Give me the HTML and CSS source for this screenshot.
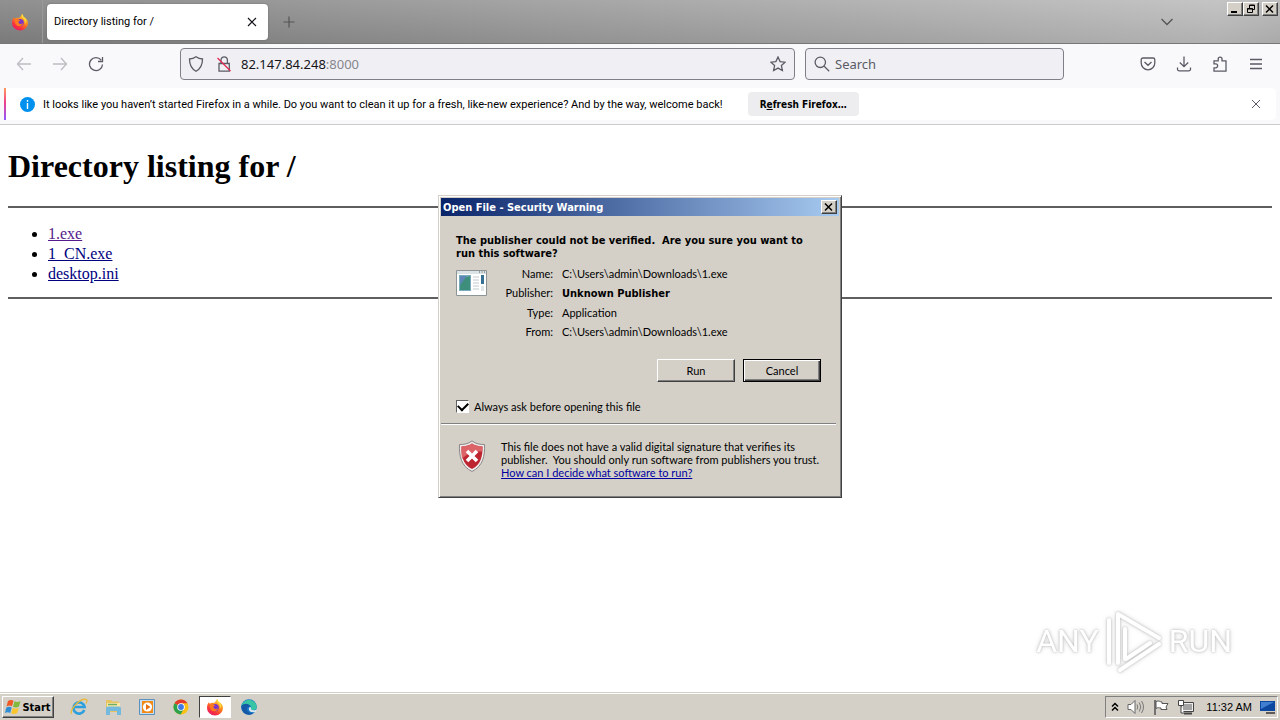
FILE: index.html
```html
<!DOCTYPE html>
<html lang="en">
<head>
<meta charset="utf-8">
<title>Directory listing for /</title>
<link rel="stylesheet" href="styles.css">
</head>
<body>
<svg class="defs" width="0" height="0" aria-hidden="true">
  <defs>
    <linearGradient id="ffOuter" x1="0.8" y1="0" x2="0.2" y2="1">
      <stop offset="0" stop-color="#ffe044"/><stop offset="0.4" stop-color="#ff8a1c"/><stop offset="0.75" stop-color="#f8303f"/><stop offset="1" stop-color="#e01a70"/>
    </linearGradient>
    <symbol id="firefox" viewBox="0 0 18 18">
      <path d="M11 1c1 1 1.300 2 1.400 2.800C15.500 5.200 17 7.600 17 10a8 7.600 0 0 1-16 0C1 7.400 1.800 5.400 3 4.200c.2.8.5 1.200 1 1.600C5.500 4.500 7 4.800 8 5c1-.6 2-2 3-4z" fill="url(#ffOuter)"/>
      <circle cx="9.200" cy="9.600" r="3.600" fill="#7a36c8"/>
      <path d="M4 6.500c2-1 4 .2 5.200 1.200-1.600.2-2 1-1.600 2 .8 1.700 3.200 1.500 4.600.5-1 3-4.200 3.800-6.400 2.200C4 11 3.500 8.500 4 6.500z" fill="#ff7a1f"/>
      <path d="M11 1c-.6 2.500.4 3.600 1.800 5 1.200 1.400 1.400 3 .9 5 2-1.800 2.200-5.200-1.300-7.200C12.300 3 12 2 11 1z" fill="#ffdc3a"/>
    </symbol>
  </defs>
</svg>

<header class="tabbar">
  <div class="view-btn"><svg width="18" height="18"><use href="#firefox"/></svg></div>
  <div class="tab">
    <span class="tab-title">Directory listing for /</span>
    <button class="icon-btn" aria-label="Close tab"><svg width="10" height="10" viewBox="0 0 10 10"><path d="M1 1l8 8M9 1l-8 8" stroke="#15141a" stroke-width="1.200"/></svg></button>
  </div>
  <button class="icon-btn newtab" aria-label="New tab"><svg width="12" height="12" viewBox="0 0 12 12"><path d="M6 .5v11M.5 6h11" stroke="#555" stroke-width="1.200"/></svg></button>
  <button class="icon-btn alltabs" aria-label="List all tabs"><svg width="14" height="8" viewBox="0 0 14 8"><path d="M1.500 1l5.500 5.500L12.500 1" fill="none" stroke="#555" stroke-width="1.300"/></svg></button>
  <div class="win-controls">
    <button class="win-btn" aria-label="Minimize"><svg width="12" height="10" viewBox="0 0 12 10"><path d="M2 7h6v2H2z"/></svg></button>
    <button class="win-btn" aria-label="Restore"><svg width="12" height="10" viewBox="0 0 12 10"><path d="M4.500 4V1h5v4.500H7M4 1.500h6M2.500 4.500h5v4h-5zM2 5h6" fill="none" stroke="#000"/></svg></button>
    <button class="win-btn close" aria-label="Close"><svg width="12" height="10" viewBox="0 0 12 10"><path d="M2 1.500l7 7M9 1.500l-7 7" stroke="#000" stroke-width="1.500"/></svg></button>
  </div>
</header>

<nav class="toolbar">
  <div class="btn-group">
    <button class="icon-btn dim" aria-label="Back"><svg width="16" height="16" viewBox="0 0 16 16"><path d="M15 8H1.500M7 2L1.500 8 7 14"/></svg></button>
    <button class="icon-btn dim" aria-label="Forward"><svg width="16" height="16" viewBox="0 0 16 16"><path d="M1 8h13.500M9 2l5.500 6L9 14"/></svg></button>
    <button class="icon-btn" aria-label="Reload"><svg width="16" height="16" viewBox="0 0 16 16"><path d="M13.200 4.200A6.500 6.500 0 1 0 14.500 8.500M14.500 1v4.500H10"/></svg></button>
  </div>
  <span class="spring"></span>
  <div class="field url">
    <svg width="16" height="16" viewBox="0 0 16 16"><path d="M8 .8c2 1.500 4.200 2.200 6.500 2.200 0 5.500-1.500 9.500-6.500 12.300C3 12.500 1.500 8.500 1.500 3 3.800 3 6 2.300 8 .8z"/></svg>
    <svg class="lock" width="16" height="16" viewBox="0 0 16 16"><path d="M3 7.500h10.300v7.700H3zM5 7.500V4a3.200 3.200 0 0 1 6.400 0v3.500"/><path d="M1.500 2l13 13" stroke="#e22850"/></svg>
    <div class="address" role="textbox" aria-label="Address">82.147.84.248<span class="port">:8000</span></div>
    <button class="icon-btn" aria-label="Bookmark this page"><svg width="16" height="16" viewBox="0 0 16 16"><path d="M8 1l2.100 4.600 5 .6-3.700 3.400 1 5L8 12.100l-4.400 2.500 1-5L.9 6.200l5-.6z"/></svg></button>
  </div>
  <div class="field search">
    <svg width="16" height="16" viewBox="0 0 16 16"><circle cx="6.300" cy="6.300" r="5.200"/><path d="M10.200 10.200l5 5"/></svg>
    <input type="text" placeholder="Search" aria-label="Search">
  </div>
  <span class="spring"></span>
  <div class="btn-group">
    <button class="icon-btn" aria-label="Pocket"><svg width="16" height="16" viewBox="0 0 16 16"><path d="M3 2h10a1.800 1.800 0 0 1 1.800 1.800V7A6.800 6.800 0 0 1 1.200 7V3.800A1.800 1.800 0 0 1 3 2zM4.500 6L8 9.300 11.500 6"/></svg></button>
    <button class="icon-btn" aria-label="Downloads"><svg width="16" height="16" viewBox="0 0 16 16"><path d="M8 .5v10M3.800 6.500L8 10.700l4.200-4.200M1.500 11.500v1.700A1.600 1.600 0 0 0 3 14.800h10a1.600 1.600 0 0 0 1.500-1.600v-1.700"/></svg></button>
    <button class="icon-btn" aria-label="Extensions"><svg width="16" height="16" viewBox="0 0 16 16"><path d="M2 7.500V4.800h4.200V3a1.900 1.900 0 0 1 3.800 0v1.800h4v10.400H2v-3.400h1.700a1.900 1.900 0 0 0 0-3.900H2z"/></svg></button>
    <button class="icon-btn" aria-label="Menu"><svg width="14" height="12" viewBox="0 0 14 12"><path d="M1 1.500h12M1 6h12M1 10.500h12"/></svg></button>
  </div>
</nav>

<div class="notice-wrap">
  <div class="notice">
    <svg width="15" height="15" viewBox="0 0 15 15"><circle cx="7.500" cy="7.500" r="7.500" fill="#0090ed"/><path d="M7.500 3v1.800M7.500 6v6" stroke="#fff" stroke-width="1.400"/></svg>
    <span class="notice-text">It looks like you haven’t started Firefox in a while. Do you want to clean it up for a fresh, like-new experience? And by the way, welcome back!</span>
    <button class="refresh">R<u>e</u>fresh Firefox…</button>
    <button class="icon-btn dismiss" aria-label="Close message"><svg width="10" height="10" viewBox="0 0 10 10"><path d="M1 1l8 8M9 1l-8 8" stroke="#5b5b66"/></svg></button>
  </div>
</div>

<main class="page">
  <h1>Directory listing for /</h1>
  <hr>
  <ul>
    <li><a class="visited" href="#">1.exe</a></li>
    <li><a href="#">1_CN.exe</a></li>
    <li><a href="#">desktop.ini</a></li>
  </ul>
  <hr>
  <div class="watermark">
    <span>ANY</span>
    <svg width="60" height="64" viewBox="0 0 60 64"><g fill="none" stroke="#fff" stroke-width="4" stroke-linejoin="round" stroke-linecap="round"><path d="M5 11v43M14 54V5l41 24M55 35L16 61M21 50V20M22 50l24-16"/></g></svg>
    <span>RUN</span>
  </div>
</main>

<section class="dialog" role="dialog" aria-labelledby="dlg-title">
  <div class="titlebar">
    <span id="dlg-title">Open File - Security Warning</span>
    <button class="win-btn" aria-label="Close dialog"><svg width="12" height="10" viewBox="0 0 12 10"><path d="M2 1.500l7 7M9 1.500l-7 7" stroke="#000" stroke-width="1.500"/></svg></button>
  </div>
  <div class="dlg-body">
    <p class="question">The publisher could not be verified.&nbsp; Are you sure you want to<br>run this software?</p>
    <div class="details">
      <svg width="31" height="26" viewBox="0 0 31 26"><path d="M.5.5h30v25H.5z" fill="#fff" stroke="#8d9496"/><path d="M1 1h29v3H1z" fill="#dce3e6"/><path d="M23 2h1M25.500 2h1M28 2h1" stroke="#555"/><path d="M3 5h12v16H3z" fill="#78aabd"/><path d="M4 9l10-3v14H4z" fill="#3d8f7c"/><path d="M4 6h7L4 15z" fill="#5c86b6"/><path d="M17 7h6M17 10h6M17 13h6M17 16h6M17 19h6" stroke="#c4cace"/><path d="M25 5h3v9h-3z" fill="#356f91"/><path d="M25 16h3v5h-3z" fill="#e1e5e8"/></svg>
      <dl>
        <dt>Name:</dt><dd>C:\Users\admin\Downloads\1.exe</dd>
        <dt>Publisher:</dt><dd><b>Unknown Publisher</b></dd>
        <dt>Type:</dt><dd>Application</dd>
        <dt>From:</dt><dd>C:\Users\admin\Downloads\1.exe</dd>
      </dl>
    </div>
    <div class="actions">
      <button class="classic">Run</button>
      <button class="classic default">Cancel</button>
    </div>
    <label class="ask"><input type="checkbox" checked>Always ask before opening this file</label>
  </div>
  <div class="dlg-foot">
    <svg width="28" height="32" viewBox="0 0 28 32"><path d="M14 1c4 3 8 3.500 12.500 3.500C27 16 25 26 14 31.500 3 26 1 16 1.500 4.500 6 4.500 10 4 14 1z" fill="#eee" stroke="#8b8585"/><path d="M14 3.500c3.500 2.300 7 3 10.500 3C24.800 16 23 24.500 14 29 5 24.500 3.200 16 3.500 6.500c3.500 0 7-.7 10.500-3z" fill="#bd2630"/><path d="M14 3.500c3.500 2.300 7 3 10.500 3l-.3 5C18 11 9 13 4 19 3.500 15 3.400 11 3.500 6.500c3.500 0 7-.7 10.500-3z" fill="#dc6468"/><path d="M9 11l10 10M19 11L9 21" stroke="#fff" stroke-width="3.600"/></svg>
    <p>This file does not have a valid digital signature that verifies its<br>publisher.&nbsp; You should only run software from publishers you trust.<br><a href="#">How can I decide what software to run?</a></p>
  </div>
</section>

<footer class="taskbar">
  <button class="start"><svg width="17" height="16" viewBox="0 0 17 16"><path d="M3 2c2-1.300 4-1.200 5.500-.2L7 7.300C5.300 6.300 3.500 6.300 1.500 7.500z" fill="#ef5a24"/><path d="M9.500 2.300c2 1 4 1 6-.3L14 7.500c-2 1.200-4 1.200-6 .2z" fill="#82b93d"/><path d="M1.200 8.700c2-1.300 4-1.200 5.500-.2L5.200 14C3.500 13 2 13 0 14z" fill="#2f8ed6"/><path d="M7.700 9c2 1 4 1 6-.3L12.200 14c-2 1.300-4 1.300-6 .3z" fill="#fbc52c"/></svg>Start</button>
  <div class="apps">
    <button class="app" aria-label="Internet Explorer"><svg width="18" height="18" viewBox="0 0 18 18"><path d="M14.300 12A5.600 5.600 0 1 1 14.600 9H4" fill="none" stroke="#2e9fdd" stroke-width="2.600"/><path d="M1.500 16C-.5 12 10-.5 16.500 1.500c1 .8.3 2.500-.5 4" fill="none" stroke="#e8b93b" stroke-width="1.300"/></svg></button>
    <button class="app" aria-label="File Explorer"><svg width="18" height="18" viewBox="0 0 18 18"><path d="M2 2h5l1 1.500h7V14H2z" fill="#e7c364"/><path d="M3 5h13v8H3z" fill="#fbe9a5"/><path d="M4 6.500h9" stroke="#6cae66" stroke-width="1.500"/><path d="M2 10.500q0-2 2-2h11q2 0 2 2V17h-4v-4H6v4H2z" fill="#74b9de"/></svg></button>
    <button class="app" aria-label="Media Player"><svg width="18" height="18" viewBox="0 0 18 18"><path d="M1.500 1.500h15v15h-15z" fill="#c8dff1" stroke="#5b91be"/><path d="M4 3h11v12H4z" fill="#f28a16"/><circle cx="9.500" cy="9" r="4.600" fill="#fff"/><path d="M8 6l4.500 3L8 12z" fill="#e8700d"/></svg></button>
    <button class="app" aria-label="Chrome"><svg width="18" height="18" viewBox="0 0 18 18"><circle cx="9" cy="9" r="7.500" fill="#fbc116"/><path d="M9 9L2.500 5.200A7.500 7.500 0 0 1 15.500 5.300H9z" fill="#e33b2e"/><path d="M2.500 5.200A7.500 7.500 0 0 0 8.500 16.500L12 10.800 9 9z" fill="#2da14c"/><circle cx="9" cy="9" r="3.800" fill="#fff"/><circle cx="9" cy="9" r="2.900" fill="#3f79e6"/></svg></button>
    <button class="app active" aria-label="Firefox"><svg width="18" height="18"><use href="#firefox"/></svg></button>
    <button class="app" aria-label="Edge"><svg width="18" height="18" viewBox="0 0 18 18"><circle cx="9" cy="9" r="7.800" fill="#1674c7"/><path d="M1.400 8A7.800 7.800 0 0 1 16.800 9c0 3.200-4 4-6 2.300 1.300-2.600-.6-4.600-3.300-4.600C4.500 6.700 2 7.500 1.400 8z" fill="#38c5a5"/><path d="M1.400 8c2-3 8-3 9 .6-3-1-4.600 2-3 4.400 1 1.700 3.400 2.600 6 2.300C8 19 1 15.500 1.400 8z" fill="#1459a5"/><path d="M10.800 11.300c2 1.500 4.600 1.300 6-.4l-1 3c-4 1-7-.4-7-3 0-1 .8-1.800 1.800-1.800.6.600.5 1.500.2 2.200z" fill="#d8e8ee"/></svg></button>
  </div>
  <div class="tray">
    <svg width="8" height="10" viewBox="0 0 8 10"><path d="M1 4.500L4 1.500l3 3M1 8.500l3-3 3 3" fill="none" stroke="#000" stroke-width="1.500"/></svg>
    <svg width="18" height="16" viewBox="0 0 18 16"><path d="M1 5.500h3l4-4v13l-4-4H1z" fill="#fff" stroke="#666"/><path d="M10 5.500q1.500 2.500 0 5M12.300 3.500q3 4.500 0 9M14.500 2q4 6 0 12" fill="none" stroke="#777"/></svg>
    <svg width="16" height="16" viewBox="0 0 16 16"><path d="M2 1v15" stroke="#555" stroke-width="1.500"/><path d="M3 2.500c3-1.500 4 .5 6 .5v1.500h6L13 8l1 2.500H8V9C6 9 5 8 3 9.500z" fill="#fff" stroke="#555"/></svg>
    <svg width="17" height="16" viewBox="0 0 17 16"><path d="M4.500 3.500h12v9h-12z" fill="#eee" stroke="#444"/><path d="M6 5h9v6H6z" fill="#a3a3a3"/><path d="M7 14.500h8" stroke="#444" stroke-width="2"/><path d="M1.500 1.500h5v5h-5zM4 6.500V14h3" fill="#fff" stroke="#444"/></svg>
    <time>11:32 AM</time>
    <svg width="16" height="14" viewBox="0 0 16 14"><path d="M0 1h15v10H0z" fill="#0c47a0"/><path d="M1 2h13L1 9z" fill="#407fd0"/><path d="M6 13h9" stroke="#333" stroke-width="1.500"/></svg>
  </div>
</footer>
</body>
</html>
```
FILE: styles.css
```css
* { box-sizing: border-box; }
body {
  margin: 0;
  min-height: 100vh;
  display: flex;
  flex-direction: column;
  position: relative;
  background: #fff;
  color: #000;
  font: 11px/13px "Liberation Sans", Arial, sans-serif;
}
button { font: inherit; color: inherit; padding: 0; margin: 0; border: 0; background: none; }
svg { display: block; flex: none; }
p, dl, dd { margin: 0; }
.defs { position: absolute; }

.icon-btn { width: 32px; height: 32px; display: flex; align-items: center; justify-content: center; }

/* Tab strip */
.tabbar {
  height: 44px;
  display: flex;
  align-items: center;
  background: linear-gradient(to bottom, rgba(255,255,255,.12), rgba(0,0,0,.06)), linear-gradient(to right, #828282, #8a8a8a 20%, #bcbcbc 95%, #b4b4b4);
  border-bottom: 1px solid #777;
}
.view-btn { width: 43px; height: 43px; padding-right: 3px; display: flex; align-items: center; justify-content: center; border-right: 1px solid #999; }
.tab {
  width: 221px;
  height: 36px;
  margin-left: 4px;
  padding: 0 0 0 7px;
  display: flex;
  align-items: center;
  justify-content: space-between;
  background: #fff;
  border-radius: 4px;
  box-shadow: 0 0 2px #666;
}
.tab-title { font-family: Roboto, sans-serif; }
.newtab { margin-left: 5px; }
.alltabs { margin-left: auto; }
.win-controls { display: flex; align-self: flex-start; margin: 2px 2px 0 44px; }
.win-btn {
  width: 16px;
  height: 14px;
  display: flex;
  align-items: center;
  justify-content: center;
  background: #d4d0c8;
  border: 1px solid;
  border-color: #fff #404040 #404040 #fff;
  box-shadow: inset -1px -1px #808080;
}
.close { margin-left: 3px; }

/* Navigation */
.toolbar {
  height: 40px;
  padding: 0 8px;
  display: flex;
  align-items: center;
  background: #f9f9fb;
  fill: none;
  stroke: #5b5b66;
  stroke-width: 1.300;
}
.btn-group { display: flex; gap: 4px; }
.dim { stroke: #bcbcc2; }
.spring { flex: 68 1 68px; }
.field {
  height: 32px;
  display: flex;
  align-items: center;
  background: #f0f0f4;
  border: 1px solid #7f7f88;
  border-radius: 4px;
  font-family: "Noto Sans", sans-serif;
  font-size: 13px;
}
.url { flex: 615 1 615px; padding-left: 7px; }
.lock { margin-left: 12px; }
.address { flex: 1; margin-left: 9px; color: #15141a; }
.port { color: #86868e; }
.search { flex: 259 1 259px; margin-left: 10px; padding-left: 8px; }
.search input { flex: 1; min-width: 0; margin-left: 5px; padding: 0; border: 0; background: none; font: inherit; color: #15141a; }
.search input::placeholder { color: #5b5b66; opacity: 1; }

/* Message bar */
.notice-wrap { padding: 4px; background: #f9f9fb; border-bottom: 1px solid #ccc; }
.notice {
  min-height: 32px;
  padding: 0 4px 0 16px;
  display: flex;
  align-items: center;
  background: linear-gradient(#ff9a5a, #f0408a 45%, #9059ff) left / 2px 100% no-repeat #fff;
  border-radius: 0 4px 4px 0;
}
.notice-text { margin-left: 8px; font-family: Roboto, sans-serif; }
.refresh { margin-left: 25px; padding: 0 12px; height: 24px; background: #ededf0; border-radius: 4px; font: bold 10px "DejaVu Sans Condensed", sans-serif; }
.dismiss { margin-left: auto; }

/* Page */
.page { flex: 1; position: relative; padding: 0 8px; font: 16px/20px "Liberation Serif", serif; }
.page h1 { margin: 21px 0 20px; font-size: 32px; line-height: 40px; }
.page hr { margin: 0; border: 0; height: 2px; background: #5f5f5f; }
.page ul { margin: 16px 0 13px; padding-left: 40px; }
.page a { color: #00007f; }
.page .visited { color: #551a8b; }
.watermark {
  position: absolute;
  right: 48px;
  bottom: 20px;
  display: flex;
  align-items: center;
  gap: 5px;
  color: #fff;
  font: 32px/64px Roboto, sans-serif;
  filter: drop-shadow(0 0 1px #bbb) drop-shadow(0 0 2px #ddd);
}

/* Dialog */
.dialog {
  position: absolute;
  left: 438px;
  top: 195px;
  width: 404px;
  background: #d4d0c8;
  border: 1px solid;
  border-color: #d4d0c8 #404040 #404040 #d4d0c8;
  box-shadow: inset 1px 1px #fff, inset -1px -1px #808080;
  padding: 2px;
  font-family: Lato, sans-serif;
}
.titlebar {
  height: 18px;
  padding: 0 2px;
  display: flex;
  align-items: center;
  justify-content: space-between;
  background: linear-gradient(to right, #0a246a, #a6caf0);
  color: #fff;
  font: bold 11px/13px "DejaVu Sans Condensed", sans-serif;
}
.dlg-body { padding: 18px 15px 10px; }
.question { font: bold 11px/13px "DejaVu Sans Condensed", sans-serif; }
.details { display: flex; align-items: flex-start; padding-top: 10px; }
.details dl { display: grid; grid-template-columns: 66px 1fr; column-gap: 9px; row-gap: 6px; margin-top: -3px; }
.details dt { text-align: right; }
.details b { font-family: "DejaVu Sans Condensed", sans-serif; }
.actions { display: flex; justify-content: flex-end; gap: 8px; padding: 21px 3px 0 0; }
.classic {
  width: 78px;
  height: 23px;
  border: 1px solid;
  border-color: #fff #404040 #404040 #fff;
  box-shadow: inset -1px -1px #808080;
}
.default { border-color: #000; box-shadow: inset 1px 1px #fff, inset -1px -1px #404040, inset -2px -2px #808080; }
.ask { display: flex; align-items: center; gap: 5px; margin-top: 18px; }
.ask input {
  appearance: none;
  width: 13px;
  height: 13px;
  margin: 0;
  padding-bottom: 2px;
  border: 1px solid;
  border-color: #606060 #fff #fff #606060;
  background: #fff;
  display: grid;
  place-items: center;
}
.ask input:checked::before { content: ""; width: 8px; height: 5px; border: solid #000; border-width: 0 0 2px 2px; transform: rotate(-45deg); }
.dlg-foot { display: flex; gap: 15px; padding: 16px 17px; margin-right: 3px; border-top: 1px solid #808080; box-shadow: inset 0 1px #fff; }
.dlg-foot p { white-space: nowrap; }
.dlg-foot a { color: #0000a0; }

/* Taskbar */
.taskbar {
  height: 27px;
  padding: 2px 2px 1px;
  display: flex;
  align-items: center;
  background: #d4d0c8;
  box-shadow: 0 -1px #d4d0c8, inset 0 1px #fff;
}
.start {
  width: 52px;
  height: 22px;
  display: flex;
  align-items: center;
  justify-content: center;
  border: 1px solid;
  border-color: #fff #404040 #404040 #fff;
  box-shadow: inset -1px -1px #808080;
  font: bold 11px/13px "DejaVu Sans Condensed", sans-serif;
}
.apps { display: flex; gap: 2px; margin-left: 9px; }
.app { width: 32px; height: 22px; display: flex; align-items: center; justify-content: center; }
.active { background: #fff; border: 1px solid; border-color: #404040 #fff #fff #404040; }
.tray {
  margin-left: auto;
  height: 22px;
  padding: 0 1px 0 5px;
  display: flex;
  align-items: center;
  gap: 8px;
  border: 1px solid;
  border-color: #808080 #fff #fff #808080;
}
.tray time { margin-left: 4px; }
```
